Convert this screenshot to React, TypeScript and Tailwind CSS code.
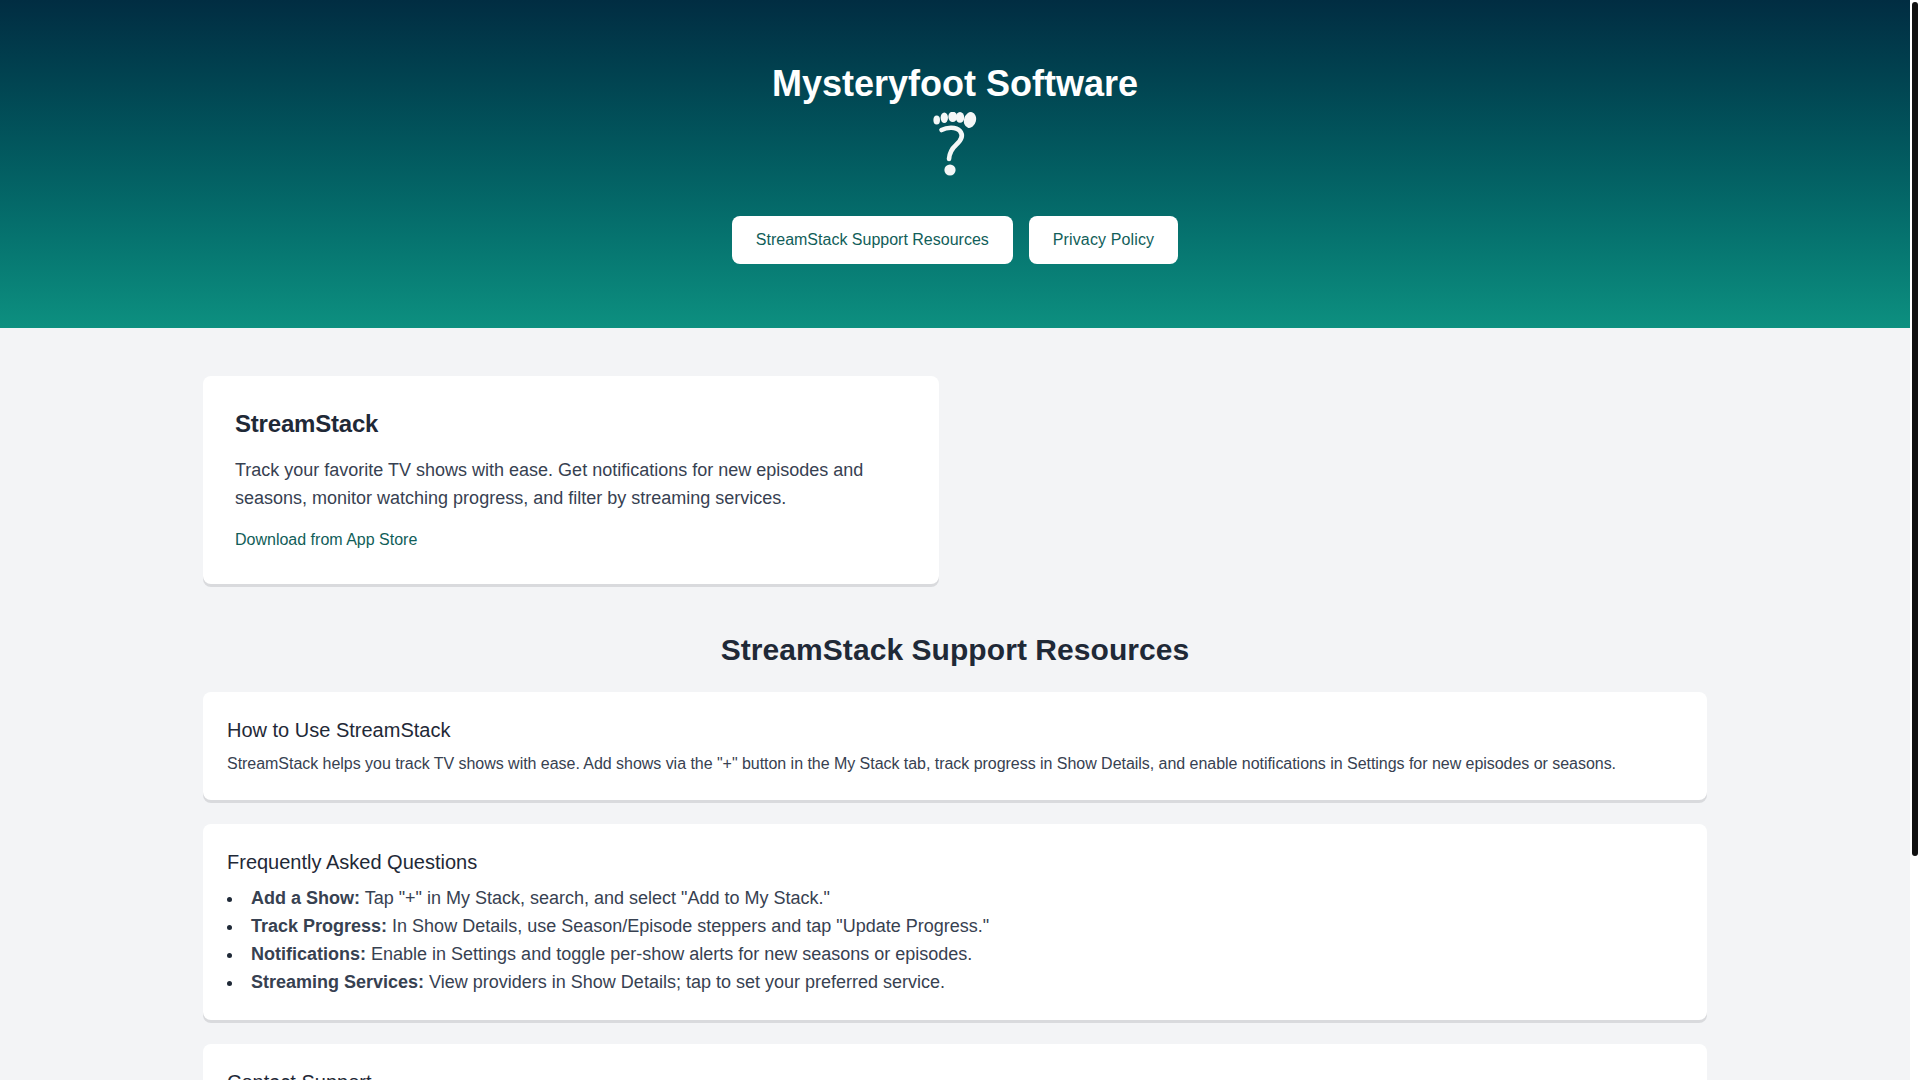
import React from 'react';

const faqs = [
  { label: 'Add a Show:', text: 'Tap "+" in My Stack, search, and select "Add to My Stack."' },
  { label: 'Track Progress:', text: 'In Show Details, use Season/Episode steppers and tap "Update Progress."' },
  { label: 'Notifications:', text: 'Enable in Settings and toggle per-show alerts for new seasons or episodes.' },
  { label: 'Streaming Services:', text: 'View providers in Show Details; tap to set your preferred service.' },
];

const FootLogo = () => (
  <svg viewBox="0 0 64 64" className="w-16 h-16 mt-2" fill="#f4f7f7">
    <ellipse cx="47" cy="8" rx="6" ry="8" transform="rotate(15 47 8)" />
    <ellipse cx="37" cy="5.4" rx="4.2" ry="5.4" />
    <ellipse cx="29.7" cy="4.8" rx="4.4" ry="5.2" />
    <ellipse cx="21.3" cy="5.8" rx="3.7" ry="5.2" />
    <ellipse cx="13.7" cy="8" rx="3.3" ry="4.6" />
    <path
      d="M18.5 18 C24 15 33 14.5 37 19 C41 24 37.5 29 33 33 C29 36.5 26.5 41 26 47"
      fill="none"
      stroke="#f4f7f7"
      strokeWidth="4.6"
      strokeLinecap="round"
    />
    <circle cx="27" cy="58" r="5.6" />
  </svg>
);

const Card = ({ title, children }: { title: string; children: React.ReactNode }) => (
  <div className="bg-white rounded-lg p-6 mb-6 shadow-[0_3px_0_0_#d9dadd]">
    <h3 className="text-xl text-[#1f2937] mb-2">{title}</h3>
    {children}
  </div>
);

export default function App() {
  return (
    <div className="flex h-screen overflow-hidden bg-white font-['Liberation_Sans',Arial,sans-serif] [text-rendering:optimizeLegibility]">
      <div className="flex-1 min-w-0 overflow-y-auto bg-[#f3f4f6]">
        <header className="bg-gradient-to-b from-[#012d42] to-[#0d9080] py-16 flex flex-col items-center">
          <h1 className="text-4xl font-bold text-white">Mysteryfoot Software</h1>
          <FootLogo />
          <nav className="flex gap-4 mt-10">
            <a href="#support" className="bg-white text-[#115e59] rounded-lg px-6 py-3">StreamStack Support Resources</a>
            <a href="#privacy" className="bg-white text-[#115e59] rounded-lg px-6 py-3 tracking-[0.13px]">Privacy Policy</a>
          </nav>
        </header>

        <main className="max-w-[1536px] mx-auto px-4 pt-12 pb-12">
          <div className="grid grid-cols-2 gap-8 mb-12">
            <div className="bg-white rounded-lg p-8 shadow-[0_3px_0_0_#d9dadd]">
              <h2 className="text-2xl font-semibold text-[#1f2937] mb-4 tracking-[-0.2px]">StreamStack</h2>
              <p className="text-lg text-[#374151]">
                Track your favorite TV shows with ease. Get notifications for new episodes and seasons, monitor watching progress, and filter by streaming services.
              </p>
              <a href="#store" className="block mt-4 text-[#115e59]">Download from App Store</a>
            </div>
          </div>

          <h2 id="support" className="text-3xl font-bold text-[#1f2937] text-center mb-6 tracking-[0.06px]">StreamStack Support Resources</h2>

          <Card title="How to Use StreamStack">
            <p className="text-[#374151] tracking-[-0.037px]">
              StreamStack helps you track TV shows with ease. Add shows via the "+" button in the My Stack tab, track progress in Show Details, and enable notifications in Settings for new episodes or seasons.
            </p>
          </Card>

          <Card title="Frequently Asked Questions">
            <ul className="text-lg text-[#374151]">
              {faqs.map((faq) => (
                <li key={faq.label} className="flex">
                  <span className="w-[5px] h-[5px] shrink-0 rounded-full bg-[#1f2937] mt-[13px] mr-[19px]" />
                  <span>
                    <strong className="font-bold">{faq.label}</strong> {faq.text}
                  </span>
                </li>
              ))}
            </ul>
          </Card>

          <Card title="Contact Support">
            <p className="text-[#374151]">
              Need more help? Email us and we will get back to you as soon as we can.
            </p>
          </Card>
        </main>
      </div>

      {/* scrollbar as it shows in the picture */}
      <aside className="w-[10px] shrink-0 bg-white px-[2px] pt-[2px]">
        <div className="h-[854px] rounded-[3px] bg-[#111111]" />
      </aside>
    </div>
  );
}
